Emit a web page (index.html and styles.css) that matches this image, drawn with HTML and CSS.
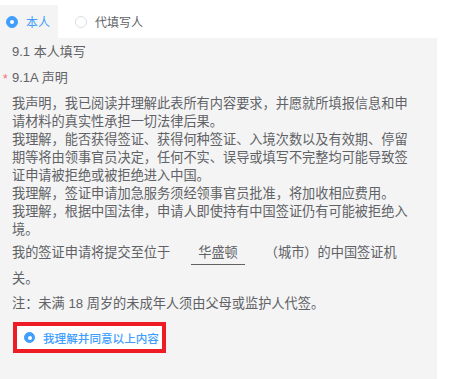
FILE: index.html
```html
<!DOCTYPE html>
<html lang="zh-CN">
<head>
    <meta charset="UTF-8">
    <meta name="viewport" content="width=device-width, initial-scale=1.0">
    <title>9.1 本人填写</title>
    <link rel="stylesheet" href="styles.css">
</head>
<body>
    <div class="tabs">
        <label class="tab active"><span class="radio checked"></span>本人</label>
        <label class="tab"><span class="radio"></span>代填写人</label>
    </div>
    <div class="panel">
        <div class="label">9.1 本人填写</div>
        <div class="label required">9.1A 声明</div>
        <div class="statement">
            我声明，我已阅读并理解此表所有内容要求，并愿就所填报信息和申请材料的真实性承担一切法律后果。<br>
            我理解，能否获得签证、获得何种签证、入境次数以及有效期、停留期等将由领事官员决定，任何不实、误导或填写不完整均可能导致签证申请被拒绝或被拒绝进入中国。<br>
            我理解，签证申请加急服务须经领事官员批准，将加收相应费用。<br>
            我理解，根据中国法律，申请人即使持有中国签证仍有可能被拒绝入境。
        </div>
        <div class="city-line">我的签证申请将提交至位于<span class="city">华盛顿</span>（城市）的中国签证机关。</div>
        <div class="note">注：未满 18 周岁的未成年人须由父母或监护人代签。</div>
        <label class="agree"><span class="radio checked small"></span>我理解并同意以上内容</label>
    </div>
</body>
</html>
```

FILE: styles.css
```css
body {
    margin: 0;
    padding-top: 5px;
    font-family: "Liberation Sans", "Noto Sans CJK SC", sans-serif;
    color: #606266;
    background-color: #fff;
}
.tabs {
    display: flex;
    height: 33px;
}
.tab {
    display: flex;
    align-items: center;
    font-size: 12px;
    color: #606266;
    margin-left: 17px;
}
.tab.active {
    background-color: #f4f4f4;
    color: #409eff;
    margin-left: 0;
    padding: 0 8px 0 6px;
}
.radio {
    box-sizing: border-box;
    width: 12px;
    height: 12px;
    border: 1px solid #dcdfe6;
    border-radius: 50%;
    background-color: #fff;
    margin-right: 8px;
    display: flex;
    align-items: center;
    justify-content: center;
}
.radio.checked {
    background-color: #409eff;
    border-color: #409eff;
}
.radio.checked::after {
    content: "";
    width: 4px;
    height: 4px;
    border-radius: 50%;
    background-color: #fff;
}
.radio.small {
    width: 11px;
    height: 11px;
}
.panel {
    width: 437px;
    box-sizing: border-box;
    background-color: #f4f4f4;
    padding: 1px 25px 30px 12px;
    min-height: 341px;
}
.label {
    font-size: 13px;
    line-height: 26px;
    position: relative;
}
.label.required::before {
    content: "*";
    color: #f56c6c;
    position: absolute;
    left: -9px;
    top: 1px;
    font-size: 12px;
}
.statement {
    margin-top: 4px;
    font-size: 13.2px;
    line-height: 18px;
}
.city-line {
    margin-top: 1px;
    font-size: 13.2px;
    line-height: 26px;
}
.city {
    display: inline-block;
    vertical-align: top;
    line-height: 18px;
    padding: 4px 7px 2px;
    margin: 0 20px 0 21px;
    border-bottom: 1px solid #606266;
}
.note {
    margin-top: 3px;
    font-size: 13.2px;
    line-height: 18px;
}
.agree {
    display: inline-flex;
    align-items: center;
    margin: 9px 0 0 1px;
    height: 23px;
    padding: 0 3px 0 7px;
    border: 4px solid #ee1c25;
    background-color: #fff;
    color: #409eff;
    font-size: 11.6px;
    font-weight: 500;
}
.agree .radio {
    margin-right: 8px;
}
```
